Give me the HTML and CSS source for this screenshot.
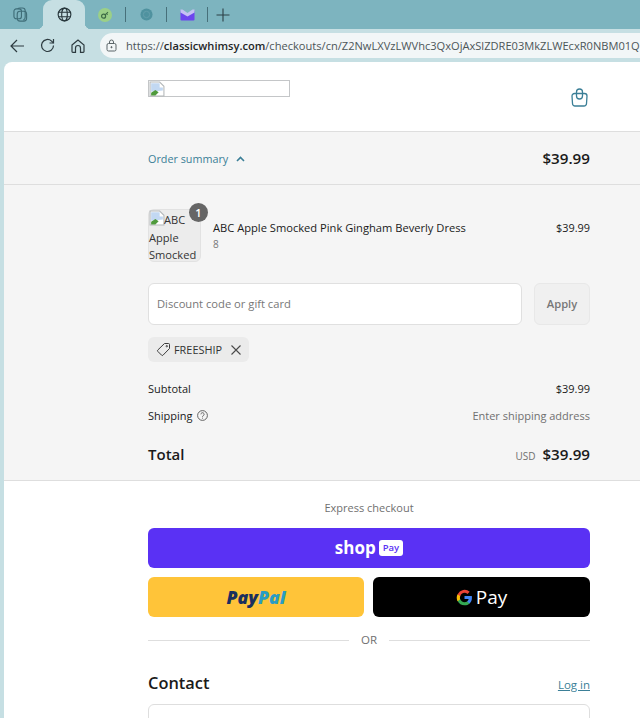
FILE: index.html
```html
<!DOCTYPE html>
<html lang="en">
<head>
    <meta charset="UTF-8">
    <meta name="viewport" content="width=device-width, initial-scale=1.0">
    <title>Checkout - Classic Whimsy</title>
    <link rel="stylesheet" href="styles.css">
</head>
<body>
    <!-- browser tabs -->
    <div class="tabbar">
        <div class="tab-slot tab-first">
            <svg width="15" height="15" viewBox="0 0 16 16" fill="none" stroke="#3f6d78" stroke-width="1.200"><rect x="1" y="2" width="8" height="10.500" rx="2.500"/><path d="M5 2c.6-.8 1.500-1 2.500-1H10c2 0 3 1 3 3v7c0 1.500-.8 2.500-2 3"/><rect x="4.500" y="4.500" width="10" height="10.500" rx="3"/></svg>
        </div>
        <div class="tab-active">
            <svg width="15" height="15" viewBox="0 0 16 16" fill="none" stroke="#27363b" stroke-width="1.200"><circle cx="8" cy="8" r="6.800"/><ellipse cx="8" cy="8" rx="3" ry="6.800"/><path d="M1.600 5.600h12.800M1.600 10.400h12.800"/></svg>
        </div>
        <div class="tab-slot tab-pinned">
            <svg width="14" height="14" viewBox="0 0 14 14"><circle cx="7" cy="7" r="7" fill="#9bd087"/><circle cx="5.600" cy="8.200" r="2" fill="none" stroke="#3d6b45" stroke-width="1.200"/><path d="M7 6.800l3-2.600M8.600 5.600l1 1" stroke="#3d6b45" stroke-width="1.100" fill="none"/></svg>
        </div>
        <div class="tab-slot tab-pinned">
            <svg width="13" height="13" viewBox="0 0 14 14"><circle cx="7" cy="7" r="6.500" fill="#4f929f"/><circle cx="7" cy="7" r="3.400" fill="none" stroke="#659fab" stroke-width="1"/></svg>
        </div>
        <div class="tab-slot tab-pinned">
            <svg width="15" height="12" viewBox="0 0 15 12"><path d="M.5 1.500l7 4.500 7-4.500v9a1 1 0 0 1-1 1h-12a1 1 0 0 1-1-1z" fill="#6d45ee"/><path d="M.5.500h2l5 3.500 5-3.500h2v3l-7 4-7-4z" fill="#c6c0f4"/></svg>
        </div>
        <div class="tab-plus">
            <svg width="14" height="14" viewBox="0 0 14 14" stroke="#2c4046" stroke-width="1.100"><path d="M7 .5v13M.5 7h13"/></svg>
        </div>
    </div>

    <!-- browser toolbar -->
    <div class="toolbar">
        <svg class="nav-back" width="15" height="14" viewBox="0 0 15 14" fill="none" stroke="#2d3b40" stroke-width="1.200"><path d="M14 7H1M7 1L1 7l6 6"/></svg>
        <svg class="nav-reload" width="15" height="15" viewBox="0 0 15 15" fill="none" stroke="#2d3b40" stroke-width="1.200"><path d="M13.500 7.500a6 6 0 1 1-1.900-4.400L13.500 5"/><path d="M13.500 1v4h-4"/></svg>
        <svg class="nav-home" width="14" height="14" viewBox="0 0 14 14" fill="none" stroke="#2d3b40" stroke-width="1.200"><path d="M1 6l6-5 6 5v6.500a.8.8 0 0 1-.8.8H9.500V9a2.500 2.500 0 0 0-5 0v4.300H1.800a.8.8 0 0 1-.8-.8z"/></svg>
        <div class="urlbar">
            <svg class="url-lock" width="11" height="13" viewBox="0 0 11 13" fill="none" stroke="#5b6568" stroke-width="1"><rect x="1" y="4.500" width="9" height="7.500" rx="1.500"/><path d="M3.500 4.500V3a2 2 0 0 1 4 0v1.500"/><circle cx="5.500" cy="8.200" r=".6" fill="#5b6568"/></svg>
            <span class="url-text">https://<b>classicwhimsy.com</b>/checkouts/cn/Z2NwLXVzLWVhc3QxOjAxSlZDRE03MkZLWEcxR0NBM01Q</span>
        </div>
    </div>

    <div class="page">
        <header class="shop-header">
            <div class="wrap shop-header-row">
                <div class="logo-broken">
                    <svg width="16" height="16" viewBox="0 0 15 15"><path d="M1 1h9l4 4v9H1z" fill="#fff" stroke="#b4b8ba"/><path d="M2 2h8v4h3v3L2 10z" fill="#c2d8f2"/><path d="M2 13.500V11l4-2.500 3 2-3 3z" fill="#4f9a3c"/></svg>
                </div>
                <svg class="bag" width="17" height="19" viewBox="0 0 17 19" fill="none" stroke="#3b7f97" stroke-width="1.300"><path d="M3.500 5.500h10a2.500 2.500 0 0 1 2.500 2.500l-.5 7.500a2.500 2.500 0 0 1-2.500 2.500H4a2.500 2.500 0 0 1-2.500-2.500L1 8a2.500 2.500 0 0 1 2.500-2.500z"/><path d="M5.500 8V4a3 3 0 0 1 6 0v4"/><path d="M5.500 8a3 3 0 0 0 6 0"/></svg>
            </div>
        </header>

        <section class="summary-bar">
            <div class="wrap summary-bar-row">
                <span class="summary-toggle">Order summary
                    <svg width="9" height="6" viewBox="0 0 9 6" fill="none" stroke="#3b7f97" stroke-width="1.600"><path d="M1 5l3.500-3.500L8 5"/></svg>
                </span>
                <span class="summary-price">$39.99</span>
            </div>
        </section>

        <section class="summary">
            <div class="wrap">
                <div class="line-item">
                    <div class="thumb">
                        <svg class="thumb-broken" width="16" height="16" viewBox="0 0 15 15"><path d="M1 1h9l4 4v9H1z" fill="#fff" stroke="#b4b8ba"/><path d="M2 2h8v4h3v3L2 10z" fill="#c2d8f2"/><path d="M2 13.500V11l4-2.500 3 2-3 3z" fill="#4f9a3c"/></svg><span class="thumb-first">ABC</span> Apple Smocked
                        <span class="thumb-badge">1</span>
                    </div>
                    <div class="item-info">
                        <div class="item-name">ABC Apple Smocked Pink Gingham Beverly Dress</div>
                        <div class="item-variant">8</div>
                    </div>
                    <div class="item-price">$39.99</div>
                </div>

                <div class="discount">
                    <div class="discount-input">Discount code or gift card</div>
                    <div class="discount-apply">Apply</div>
                </div>

                <div class="tag">
                    <svg width="15" height="15" viewBox="0 0 15 15" fill="none" stroke="#3c3c3c" stroke-width="1"><path d="M8.500 1.500h4a1 1 0 0 1 1 1v4L7 13.200a1 1 0 0 1-1.400 0L1.800 9.400a1 1 0 0 1 0-1.400z"/><circle cx="10.800" cy="4.200" r=".7"/></svg>
                    <span>FREESHIP</span>
                    <svg class="tag-close" width="10" height="10" viewBox="0 0 10 10" stroke="#4a4a4a" stroke-width="1.100"><path d="M.5.500l9 9M9.500.500l-9 9"/></svg>
                </div>

                <div class="cost-row cost-subtotal">
                    <span>Subtotal</span>
                    <span>$39.99</span>
                </div>
                <div class="cost-row cost-shipping">
                    <span class="cost-label">Shipping
                        <svg width="11" height="11" viewBox="0 0 11 11" fill="none" stroke="#555" stroke-width=".9"><circle cx="5.500" cy="5.500" r="4.900"/><path d="M3.900 4.300a1.600 1.600 0 1 1 2.400 1.400c-.5.300-.8.500-.8 1.100"/><path d="M5.500 7.700v.9"/></svg>
                    </span>
                    <span class="cost-muted">Enter shipping address</span>
                </div>
                <div class="cost-row cost-total">
                    <span class="total-label">Total</span>
                    <span class="total-value"><small>USD</small> $39.99</span>
                </div>
            </div>
        </section>

        <section class="checkout">
            <div class="wrap">
                <div class="express-title">Express checkout</div>
                <div class="btn-shop"><span class="shop-word">shop</span><span class="shop-pay">Pay</span></div>
                <div class="btn-row">
                    <div class="btn-paypal"><span class="pp-dark">Pay</span><span class="pp-light">Pal</span></div>
                    <div class="btn-gpay">
                        <svg width="17" height="17" viewBox="0 0 48 48"><path fill="#4285f4" d="M45 24.500c0-1.600-.1-3.100-.4-4.500H24v8.500h11.800a10 10 0 0 1-4.400 6.600v5.500h7.100c4.200-3.800 6.500-9.500 6.500-16.100z"/><path fill="#34a853" d="M24 46c5.900 0 10.900-2 14.500-5.400l-7.100-5.500c-2 1.300-4.500 2.100-7.400 2.100-5.700 0-10.500-3.800-12.200-9H4.500v5.700A22 22 0 0 0 24 46z"/><path fill="#fbbc05" d="M11.800 28.700a13 13 0 0 1 0-8.400v-5.700H4.500a22 22 0 0 0 0 19.800z"/><path fill="#ea4335" d="M24 10.700c3.200 0 6.100 1.100 8.400 3.300l6.300-6.300A22 22 0 0 0 4.500 14.600l7.300 5.700c1.700-5.200 6.500-9.600 12.200-9.600z"/></svg>
                        <span>Pay</span>
                    </div>
                </div>
                <div class="or-row"><span>OR</span></div>
                <div class="contact-head">
                    <h2>Contact</h2>
                    <a href="#">Log in</a>
                </div>
                <div class="contact-input"></div>
            </div>
        </section>
    </div>
</body>
</html>
```

FILE: styles.css
```css
html, body {
    margin: 0;
    height: 718px;
    overflow: hidden;
}
body {
    font-family: 'Open Sans', 'Noto Sans', sans-serif;
    background-color: #c6dfe3;
    color: #1a1a1a;
}
.tabbar {
    height: 29px;
    background-color: #7db4bf;
    display: flex;
    align-items: center;
}
.tab-slot {
    display: flex;
    align-items: center;
    justify-content: center;
    height: 15px;
}
.tab-first {
    width: 40px;
    margin-right: 3px;
}
.tab-active {
    position: relative;
    width: 42px;
    height: 29px;
    background-color: #c6dfe3;
    border-radius: 9px 9px 0 0;
    display: flex;
    align-items: center;
    justify-content: center;
}
.tab-active::before, .tab-active::after {
    content: "";
    position: absolute;
    bottom: 0;
    width: 6px;
    height: 6px;
}
.tab-active::before {
    left: -6px;
    background: radial-gradient(circle at 0 0, transparent 6px, #c6dfe3 6.500px);
}
.tab-active::after {
    right: -6px;
    background: radial-gradient(circle at 100% 0, transparent 6px, #c6dfe3 6.500px);
}
.tab-pinned {
    width: 40px;
    border-right: 1px solid #47707a;
}
.tab-plus {
    width: 29px;
    display: flex;
    justify-content: center;
}
.toolbar {
    height: 33px;
    display: flex;
    align-items: center;
}
.nav-back {
    margin-left: 10px;
}
.nav-reload {
    margin-left: 15px;
}
.nav-home {
    margin-left: 16px;
}
.urlbar {
    margin-left: 15px;
    flex: 1;
    min-width: 0;
    height: 25px;
    background-color: #f2f6f7;
    border-radius: 13px 0 0 13px;
    display: flex;
    align-items: center;
    overflow: hidden;
}
.url-lock {
    margin-left: 6px;
    flex-shrink: 0;
}
.url-text {
    margin-left: 9px;
    font-size: 11.100px;
    color: #4c5557;
    white-space: nowrap;
}
.url-text b {
    color: #1f2628;
    font-weight: 600;
}
.page {
    margin-left: 4px;
    height: 656px;
    background-color: #fff;
    border-radius: 8px 0 0 0;
    overflow: hidden;
}
.wrap {
    width: 442px;
    margin-left: 144px;
}
.shop-header {
    height: 69px;
    border-bottom: 1px solid #dedede;
}
.shop-header-row {
    display: flex;
    justify-content: space-between;
}
.logo-broken {
    box-sizing: border-box;
    width: 142px;
    height: 17px;
    margin-top: 18px;
    border: 1px solid #c4c6c8;
    background: #fff;
}
.logo-broken svg {
    display: block;
}
.bag {
    margin-top: 26px;
    margin-right: 2px;
}
.summary-bar {
    height: 52px;
    background-color: #f5f5f5;
    border-bottom: 1px solid #dedede;
}
.summary-bar-row {
    height: 52px;
    display: flex;
    justify-content: space-between;
    align-items: center;
}
.summary-toggle {
    font-size: 10.800px;
    color: #3b7f97;
}
.summary-toggle svg {
    margin-left: 5px;
    vertical-align: 1px;
}
.summary-price {
    font-size: 15.200px;
    font-weight: 600;
}
.summary {
    height: 295px;
    background-color: #f5f5f5;
    border-bottom: 1px solid #dedede;
}
.summary .wrap {
    padding-top: 24px;
}
.line-item {
    display: flex;
    align-items: flex-start;
}
.thumb {
    position: relative;
    box-sizing: border-box;
    width: 53px;
    height: 53px;
    background-color: #ececec;
    border: 1px solid #e2e2e2;
    border-radius: 6px;
    font-size: 11.100px;
    line-height: 17.500px;
    color: #333;
    flex-shrink: 0;
}
.thumb-broken {
    vertical-align: -2px;
}
.thumb-first {
    margin-left: -1px;
}
.thumb-badge {
    position: absolute;
    top: -7px;
    right: -8px;
    width: 19px;
    height: 19px;
    border-radius: 50%;
    background-color: #666;
    color: #fff;
    font-size: 11px;
    font-weight: 600;
    line-height: 19px;
    text-align: center;
}
.item-info {
    flex: 1;
    margin-left: 12px;
    padding-top: 10px;
}
.item-name {
    font-size: 11.150px;
    line-height: 17px;
}
.item-variant {
    font-size: 10px;
    line-height: 15px;
    color: #777;
    margin-top: 1px;
}
.item-price {
    font-size: 10.900px;
    line-height: 17px;
    padding-top: 10px;
}
.discount {
    display: flex;
    gap: 12px;
    margin-top: 21px;
}
.discount-input {
    box-sizing: border-box;
    flex: 1;
    height: 42px;
    background: #fff;
    border: 1px solid #e0e0e0;
    border-radius: 6px;
    padding-left: 8px;
    font-size: 11.200px;
    line-height: 40px;
    color: #777;
}
.discount-apply {
    box-sizing: border-box;
    width: 56px;
    height: 42px;
    background-color: #f0f0f0;
    border: 1px solid #e8e8e8;
    border-radius: 6px;
    font-size: 11.200px;
    font-weight: 600;
    line-height: 40px;
    text-align: center;
    color: #777;
}
.tag {
    display: inline-flex;
    align-items: center;
    height: 25px;
    margin-top: 12px;
    padding: 0 8px;
    background-color: #ebebeb;
    border-radius: 6px;
    font-size: 10.900px;
    color: #333;
}
.tag span {
    margin-left: 3px;
}
.tag-close {
    margin-left: 9px;
}
.cost-row {
    display: flex;
    justify-content: space-between;
    align-items: center;
    font-size: 11px;
}
.cost-subtotal {
    margin-top: 18px;
    height: 17px;
}
.cost-shipping {
    margin-top: 10px;
    height: 17px;
}
.cost-label svg {
    margin-left: 2px;
    vertical-align: -1px;
}
.cost-muted {
    color: #707070;
}
.cost-total {
    margin-top: 19px;
    height: 22px;
}
.total-label {
    font-size: 15px;
    font-weight: 600;
}
.total-value {
    font-size: 15.200px;
    font-weight: 600;
}
.total-value small {
    font-size: 10px;
    font-weight: 400;
    color: #707070;
    margin-right: 3px;
}
.express-title {
    padding-top: 19px;
    font-size: 11px;
    line-height: 16px;
    text-align: center;
    color: #707070;
}
.btn-shop {
    height: 40px;
    margin-top: 12px;
    background-color: #5a31f4;
    border-radius: 6px;
    display: flex;
    align-items: center;
    justify-content: center;
    gap: 3px;
    color: #fff;
}
.shop-word {
    font-size: 17px;
    font-weight: 700;
    line-height: 24px;
}
.shop-pay {
    background: #fff;
    color: #5a31f4;
    font-size: 9.500px;
    font-weight: 600;
    line-height: 16px;
    padding: 0 4px;
    border-radius: 3px;
}
.btn-row {
    display: flex;
    gap: 9px;
    margin-top: 9px;
}
.btn-paypal, .btn-gpay {
    height: 40px;
    border-radius: 6px;
    display: flex;
    align-items: center;
    justify-content: center;
}
.btn-paypal {
    width: 216px;
    background-color: #ffc439;
    font-size: 17.800px;
    font-weight: 800;
    font-style: italic;
}
.pp-dark {
    color: #1b2f5e;
}
.pp-light {
    color: #2a9cc4;
}
.btn-gpay {
    flex: 1;
    background-color: #000;
    color: #fff;
    font-size: 19px;
    gap: 3px;
}
.or-row {
    display: flex;
    align-items: center;
    gap: 12px;
    margin-top: 15px;
    font-size: 11.500px;
    line-height: 16px;
    color: #707070;
}
.or-row::before, .or-row::after {
    content: "";
    flex: 1;
    height: 1px;
    background-color: #dedede;
}
.contact-head {
    display: flex;
    justify-content: space-between;
    align-items: baseline;
    margin-top: 23px;
}
.contact-head h2 {
    margin: 0;
    font-size: 16.400px;
    font-weight: 600;
    line-height: 24px;
}
.contact-head a {
    font-size: 11.500px;
    color: #3b7f97;
}
.contact-input {
    height: 40px;
    margin-top: 9px;
    border: 1px solid #dedede;
    border-radius: 6px;
}
```
